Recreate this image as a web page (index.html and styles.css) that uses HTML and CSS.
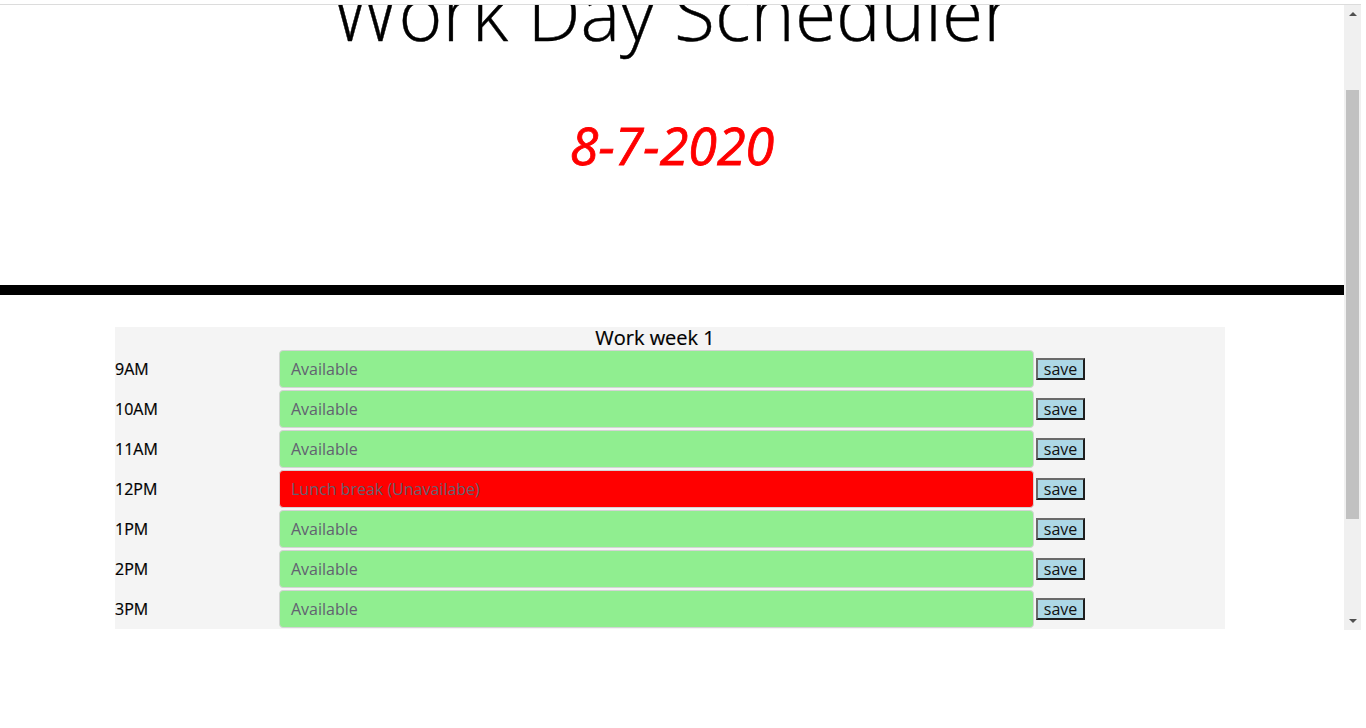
FILE: index.html
```html
<!DOCTYPE html>
<html lang="en">
<head>
<meta charset="utf-8">
<title>Work Day Scheduler</title>
<link rel="stylesheet" href="styles.css">
</head>
<body>
<div class="frame">
  <div class="viewport">
    <div class="page">
      <header class="jumbo">
        <h1 class="title">Work Day Scheduler</h1>
        <p class="date">8-7-2020</p>
      </header>
      <div class="rule"></div>
      <main class="container">
        <h2 class="week">Work week 1</h2>
        <div class="row"><span class="hour">9AM</span><textarea class="slot free">Available</textarea><button class="save">save</button></div>
        <div class="row"><span class="hour">10AM</span><textarea class="slot free">Available</textarea><button class="save">save</button></div>
        <div class="row"><span class="hour">11AM</span><textarea class="slot free">Available</textarea><button class="save">save</button></div>
        <div class="row"><span class="hour">12PM</span><textarea class="slot busy">Lunch break (Unavailabe)</textarea><button class="save">save</button></div>
        <div class="row"><span class="hour">1PM</span><textarea class="slot free">Available</textarea><button class="save">save</button></div>
        <div class="row"><span class="hour">2PM</span><textarea class="slot free">Available</textarea><button class="save">save</button></div>
        <div class="row"><span class="hour">3PM</span><textarea class="slot free">Available</textarea><button class="save">save</button></div>
      </main>
    </div>
  </div>
  <div class="scrollbar">
    <span class="arrow up"></span>
    <div class="track"><div class="thumb"></div></div>
    <span class="arrow down"></span>
  </div>
</div>
</body>
</html>
```
FILE: styles.css
```css
html, body {
  margin: 0;
  padding: 0;
  background: #fff;
}
body {
  font-family: "Open Sans", "Liberation Sans", sans-serif;
  color: #000;
  padding-top: 4px;
}
.frame {
  width: 1361px;
  height: 625px;
  border-top: 1px solid #dcdcdc;
  display: flex;
}
.viewport {
  width: 1344px;
  height: 625px;
  overflow: hidden;
}
.page {
  margin-top: -38px;
}
.jumbo {
  text-align: center;
  height: 318px;
}
.title {
  margin: 0;
  font-size: 75px;
  line-height: 90px;
  font-weight: 300;
  -webkit-text-stroke: 0.4px #000;
}
.date {
  margin: 57px 0 0;
  font-size: 52px;
  line-height: 62.4px;
  font-style: italic;
  font-weight: 500;
  color: #ff0000;
  -webkit-text-stroke: 0.8px #ff0000;
}
.rule {
  height: 10px;
  background: #000;
}
.container {
  width: 1110px;
  margin: 32px 0 0 115px;
  background: #f4f4f4;
}
.week {
  margin: 0;
  padding-right: 30px;
  text-align: center;
  font-size: 20px;
  line-height: 22px;
  font-weight: 400;
  -webkit-text-stroke: 0.2px #000;
}
.row {
  height: 40px;
  display: flex;
  align-items: center;
}
.hour {
  width: 164px;
  font-size: 16px;
  -webkit-text-stroke: 0.2px #000;
}
.slot {
  box-sizing: border-box;
  width: 755px;
  height: 38px;
  margin: 0;
  padding: 6px 11px;
  border: 1px solid #d4d4d4;
  border-radius: 4px;
  resize: none;
  overflow: hidden;
  font-family: "Open Sans", "Liberation Sans", sans-serif;
  font-size: 16px;
  line-height: 24px;
  color: #626270;
}
.free { background: #90ee90; }
.busy { background: #ff0000; }
.save {
  margin-left: 2px;
  box-sizing: border-box;
  width: 49px;
  height: 22px;
  padding: 0;
  background: #add8e6;
  border: 2px solid;
  border-color: #6a6a6a #1e1e1e #1e1e1e #6a6a6a;
  font-family: "Open Sans", "Liberation Sans", sans-serif;
  font-size: 16px;
  line-height: 16px;
  color: #111;
}
.scrollbar {
  width: 17px;
  height: 625px;
  background: #f0f0f0;
  display: flex;
  flex-direction: column;
  align-items: center;
}
.arrow {
  width: 0;
  height: 0;
  border-left: 4px solid transparent;
  border-right: 4px solid transparent;
}
.arrow.up {
  margin-top: 7px;
  border-bottom: 4px solid #505050;
}
.arrow.down {
  margin-bottom: 7px;
  border-top: 4px solid #505050;
}
.track {
  flex: 1;
  width: 13px;
}
.thumb {
  margin-top: 74px;
  height: 429px;
  background: #c1c1c1;
}
```
